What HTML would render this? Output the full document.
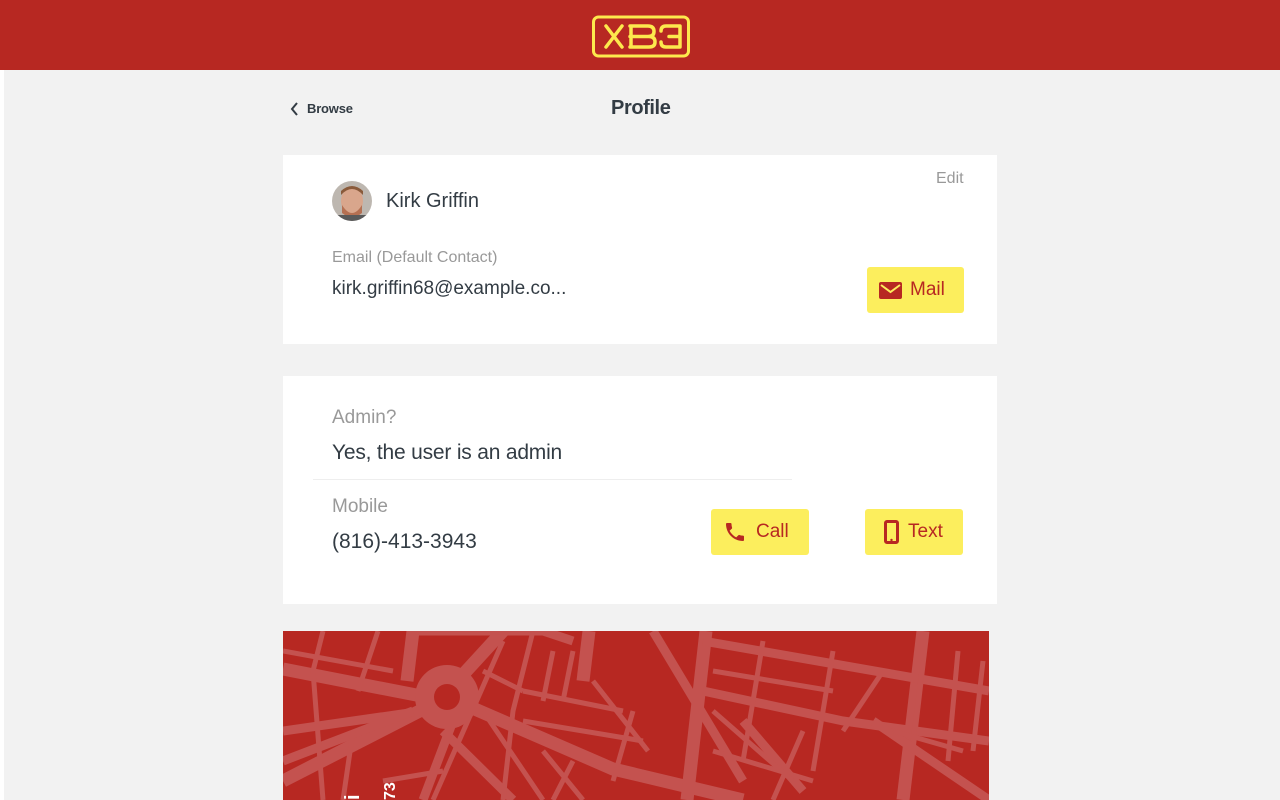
<!DOCTYPE html>
<html><head><meta charset="utf-8"><style>
*{margin:0;padding:0;box-sizing:border-box}
html,body{width:1280px;height:800px;overflow:hidden}
body{background:#f2f2f2;font-family:"Liberation Sans",Roboto,sans-serif;position:relative;color:#333c44}
.hdr{position:absolute;left:0;top:0;width:1280px;height:70px;background:#b72822}
.strip{position:absolute;left:0;top:70px;width:4px;height:730px;background:#fff}
.abs{position:absolute;white-space:nowrap}
.card{position:absolute;background:#fff}
.btn{position:absolute;background:#fcee5d;border-radius:3px;color:#b72822;font-size:19px;display:flex;align-items:center}
.gray{color:#999}
</style></head><body>
<div class="hdr">
<svg width="1280" height="70" style="position:absolute;left:0;top:0">
<rect x="593.5" y="17" width="95" height="39" rx="5" fill="none" stroke="#fde94d" stroke-width="3"/>
<g stroke="#fde94d" stroke-width="3.5" fill="none" stroke-linecap="round">
<path d="M606 26 L622 47 M622 26 L606 47"/>
<path d="M630 26 H648 Q654 26 654 31.5 Q654 36.5 648 36.5 H632 M630 36.5 H649 Q655 36.5 655 42 Q655 47 649 47 H630 M631 26 V47"/>
<path d="M680 26 H666 Q661 26 661 31 M680 26 V47 M669 36.5 H680 M680 47 H666 Q661 47 661 42"/>
</g>
</svg>
</div>
<div class="strip"></div>
<svg class="abs" style="left:290px;top:102px" width="10" height="14"><path d="M7 1 L2 7 L7 13" stroke="#333c44" stroke-width="2" fill="none"/></svg>
<div class="abs" style="left:307px;top:101px;font-size:13px;font-weight:bold;letter-spacing:-0.2px">Browse</div>
<div class="abs" style="left:611px;top:97px;font-size:20px;font-weight:bold;letter-spacing:-0.4px">Profile</div>

<div class="card" style="left:283px;top:155px;width:714px;height:189px"></div>
<svg class="abs" style="left:332px;top:181px" width="40" height="40">
<defs><clipPath id="c"><circle cx="20" cy="20" r="20"/></clipPath></defs>
<g clip-path="url(#c)"><rect width="40" height="40" fill="#bdb7b0"/>
<ellipse cx="20" cy="20" rx="11" ry="14" fill="#d9a68c"/>
<path d="M9 14 Q20 2 31 14 L31 10 Q20 0 9 10Z" fill="#8a5a3a"/>
<path d="M10 24 Q20 40 30 24 L30 32 Q20 40 10 32Z" fill="#b57052"/>
<rect x="4" y="34" width="32" height="8" fill="#5a5a5a"/></g></svg>
<div class="abs" style="left:386px;top:190px;font-size:20px">Kirk Griffin</div>
<div class="abs gray" style="left:936px;top:170px;font-size:16px">Edit</div>
<div class="abs gray" style="left:332px;top:249px;font-size:16px">Email (Default Contact)</div>
<div class="abs" style="left:332px;top:278px;font-size:19px">kirk.griffin68@example.co...</div>
<div class="btn" style="left:867px;top:267px;width:97px;height:46px">
<svg style="margin-left:12px" width="23" height="17"><rect width="23" height="17" rx="2" fill="#b72822"/><path d="M2 3 L11.5 10 L21 3" stroke="#fcee5d" stroke-width="2" fill="none"/></svg>
<span style="margin-left:8px">Mail</span></div>

<div class="card" style="left:283px;top:376px;width:714px;height:228px"></div>
<div class="abs gray" style="left:332px;top:407px;font-size:19px">Admin?</div>
<div class="abs" style="left:332px;top:441px;font-size:21px;letter-spacing:-0.2px">Yes, the user is an admin</div>
<div class="abs" style="left:313px;top:479px;width:479px;height:1px;background:#eee"></div>
<div class="abs gray" style="left:332px;top:496px;font-size:19px">Mobile</div>
<div class="abs" style="left:332px;top:530px;font-size:21px">(816)-413-3943</div>
<div class="btn" style="left:711px;top:509px;width:98px;height:46px">
<svg style="margin-left:12px" width="24" height="24" viewBox="0 0 24 24"><path fill="#b72822" d="M6.6 10.8c1.4 2.8 3.8 5.1 6.6 6.6l2.2-2.2c.3-.3.7-.4 1-.2 1.1.4 2.3.6 3.6.6.6 0 1 .4 1 1V20c0 .6-.4 1-1 1C10.6 21 3 13.4 3 4c0-.6.4-1 1-1h3.5c.6 0 1 .4 1 1 0 1.3.2 2.5.6 3.6.1.3 0 .7-.2 1z"/></svg>
<span style="margin-left:9px">Call</span></div>
<div class="btn" style="left:865px;top:509px;width:98px;height:46px">
<svg style="margin-left:19px" width="15" height="24"><rect x="1.5" y="1.5" width="12" height="21" rx="1.5" fill="none" stroke="#b72822" stroke-width="3"/><rect x="3" y="3" width="9" height="15" fill="#fcee5d"/><circle cx="7.5" cy="20" r="1.2" fill="#b72822"/></svg>
<span style="margin-left:9px">Text</span></div>

<svg class="abs" style="left:283px;top:631px;overflow:hidden" width="706" height="169">
<rect width="706" height="169" fill="#b72822"/>
<g stroke="#c4524f" fill="none" stroke-linecap="butt">
<g stroke-width="13">
<path d="M0 38 L164 70"/><path d="M164 66 L330 138 L460 169"/>
<path d="M164 66 L0 150"/><path d="M130 0 L124 50"/>
<path d="M423 0 L404 169"/><path d="M306 0 L300 50"/>
<path d="M640 0 L620 169"/>
<path d="M220 0 L165 60"/>
</g>
<g stroke-width="9">
<path d="M0 100 L140 80"/><path d="M0 130 L130 80"/>
<path d="M370 0 L460 150"/><path d="M160 100 L230 169"/>
<path d="M130 0 L260 0 L290 10"/><path d="M420 60 L560 90 L706 110"/>
<path d="M420 10 L706 60"/><path d="M170 90 L140 169"/>
<path d="M520 160 L460 90"/><path d="M590 90 L706 169"/>
</g>
<g stroke-width="5">
<path d="M40 0 L30 40 L40 169"/><path d="M95 0 L75 60"/><path d="M0 20 L110 40"/>
<path d="M70 100 L60 169"/><path d="M220 10 L150 169"/>
<path d="M250 0 L230 80 L220 169"/><path d="M270 20 L260 70"/><path d="M290 20 L280 70"/>
<path d="M240 60 L340 80"/><path d="M240 90 L360 110"/><path d="M200 80 L260 169"/>
<path d="M310 50 L365 120"/><path d="M350 80 L330 150"/><path d="M260 120 L300 169"/>
<path d="M290 130 L270 169"/><path d="M200 40 L240 60"/>
<path d="M430 40 L550 60"/><path d="M480 10 L460 130"/><path d="M430 120 L530 150"/>
<path d="M430 80 L510 150"/><path d="M520 100 L490 169"/>
<path d="M550 20 L530 140"/>
<path d="M560 100 L600 40"/><path d="M640 30 L630 110"/><path d="M675 20 L665 130"/>
<path d="M610 100 L680 120"/><path d="M700 30 L690 120"/>
<path d="M100 150 L160 140"/>
</g>
</g>
<circle cx="164" cy="66" r="32" fill="#c4524f"/>
<circle cx="164" cy="66" r="13" fill="#b72822"/>
<text x="0" y="0" transform="translate(112,169) rotate(-90)" fill="#fff" font-size="16" font-weight="bold" font-family="Liberation Sans">73</text>
<text x="0" y="0" transform="translate(76,169) rotate(-90)" fill="#fff" font-size="20" font-weight="bold" font-family="Liberation Sans">i</text>
</svg>
</body></html>
